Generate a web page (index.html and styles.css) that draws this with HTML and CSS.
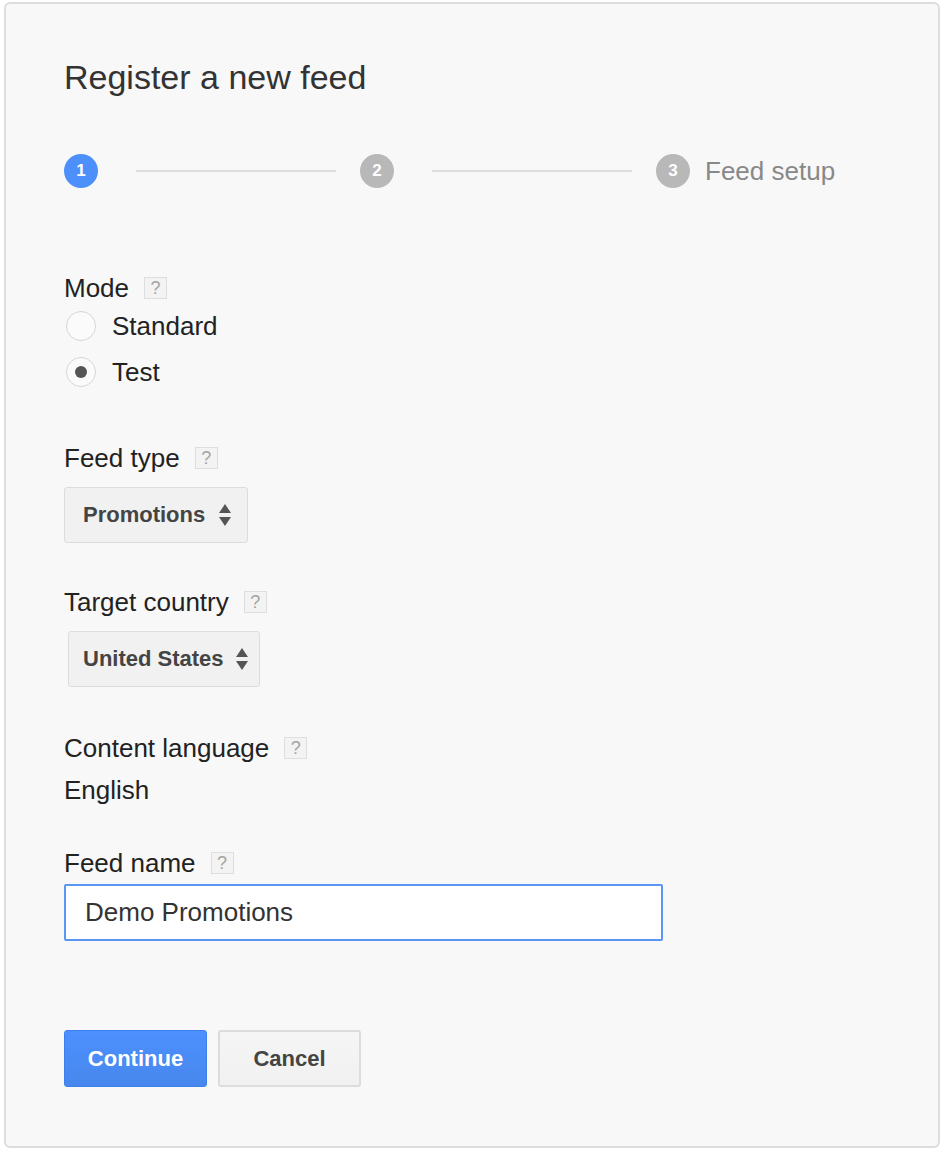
FILE: index.html
```html
<!DOCTYPE html>
<html>
<head>
<meta charset="utf-8">
<link rel="stylesheet" href="styles.css">
</head>
<body>
<div class="panel">
  <h1 class="title">Register a new feed</h1>

  <div class="stepper">
    <span class="step step-active">1</span>
    <span class="step-line"></span>
    <span class="step">2</span>
    <span class="step-line"></span>
    <span class="step">3</span>
    <span class="step-label">Feed setup</span>
  </div>

  <div class="field field-mode">
    <div class="label">Mode <span class="help">?</span></div>
    <div class="radios">
      <div class="radio-row"><span class="radio"></span><span>Standard</span></div>
      <div class="radio-row"><span class="radio radio-on"></span><span>Test</span></div>
    </div>
  </div>

  <div class="field field-type">
    <div class="label">Feed type <span class="help">?</span></div>
    <div class="select">
      <span>Promotions</span>
      <svg class="arrows" width="14" height="24" viewBox="0 0 14 24"><path d="M1 10 L7 1 L13 10 Z M1 14 L13 14 L7 23 Z" fill="#555"/></svg>
    </div>
  </div>

  <div class="field field-country">
    <div class="label">Target country <span class="help">?</span></div>
    <div class="select select-country">
      <span>United States</span>
      <svg class="arrows" width="14" height="24" viewBox="0 0 14 24"><path d="M1 10 L7 1 L13 10 Z M1 14 L13 14 L7 23 Z" fill="#555"/></svg>
    </div>
  </div>

  <div class="field field-lang">
    <div class="label">Content language <span class="help">?</span></div>
    <div class="value">English</div>
  </div>

  <div class="field field-name">
    <div class="label">Feed name <span class="help">?</span></div>
    <div class="input">Demo Promotions</div>
  </div>

  <div class="buttons">
    <button class="btn btn-primary">Continue</button>
    <button class="btn btn-default">Cancel</button>
  </div>
</div>
</body>
</html>
```

FILE: styles.css
```css
html, body {
  margin: 0;
  padding: 0;
  background: #ffffff;
}

body {
  padding: 2px 2px 0 4px;
  font-family: "Liberation Sans", Arial, sans-serif;
  color: #222;
}

.panel {
  width: 936px;
  box-sizing: border-box;
  border: 2px solid #dddddd;
  border-radius: 6px;
  background: #f8f8f8;
  padding: 53px 60px 59px 58px;
}

.title {
  margin: 0;
  font-size: 34px;
  line-height: 40px;
  font-weight: normal;
  color: #333;
}

.stepper {
  margin-top: 57px;
  display: flex;
  align-items: center;
  height: 34px;
}

.step {
  width: 34px;
  height: 34px;
  border-radius: 50%;
  background: #b8b8b8;
  color: #fff;
  font-size: 17px;
  font-weight: bold;
  display: flex;
  align-items: center;
  justify-content: center;
  flex: none;
}

.step-active {
  background: #4d8ffb;
}

.step-line {
  width: 200px;
  height: 2px;
  background: #dddddd;
  margin: 0 24px 0 38px;
  flex: none;
}

.step-label {
  margin-left: 15px;
  font-size: 26px;
  color: #888;
}

.label {
  display: flex;
  align-items: center;
  font-size: 26px;
  line-height: 30px;
  height: 30px;
  color: #222;
}

.help {
  margin-left: 15px;
  width: 21px;
  height: 20px;
  border: 1px solid #dedede;
  background: #f3f3f3;
  color: #a3a3a3;
  font-size: 18px;
  line-height: 21px;
  text-align: center;
  display: inline-block;
}

.field-mode { margin-top: 85px; }
.field-type { margin-top: 56px; }
.field-country { margin-top: 44px; }
.field-lang { margin-top: 46px; }
.field-name { margin-top: 43px; }

.radios {
  margin-top: 8px;
  display: flex;
  flex-direction: column;
  gap: 16px;
}

.radio-row {
  display: flex;
  align-items: center;
  height: 30px;
  font-size: 26px;
  line-height: 30px;
  color: #222;
}

.radio {
  width: 28px;
  height: 28px;
  border: 1px solid #d6d6d6;
  border-radius: 50%;
  background: #fbfbfb;
  margin: 0 16px 0 2px;
  display: flex;
  align-items: center;
  justify-content: center;
  flex: none;
}

.radio-on::after {
  content: "";
  width: 12px;
  height: 12px;
  border-radius: 50%;
  background: #555;
}

.select {
  margin-top: 14px;
  display: inline-flex;
  align-items: center;
  gap: 13px;
  height: 56px;
  box-sizing: border-box;
  padding: 0 15px 0 18px;
  border: 1px solid #dcdcdc;
  border-radius: 3px;
  background: #f1f1f1;
  font-size: 22px;
  font-weight: bold;
  color: #444;
}

.select-country {
  margin-left: 4px;
  padding-left: 14px;
  gap: 11px;
  padding-right: 10px;
}

.arrows {
  flex: none;
}

.value {
  margin-top: 12px;
  font-size: 26px;
  line-height: 30px;
  color: #222;
}

.input {
  margin-top: 6px;
  width: 599px;
  height: 57px;
  box-sizing: border-box;
  border: 2px solid #5b97f2;
  border-radius: 2px;
  background: #fff;
  padding-left: 19px;
  display: flex;
  align-items: center;
  font-size: 26px;
  color: #333;
}

.buttons {
  margin-top: 89px;
  display: flex;
  gap: 11px;
}

.btn {
  width: 143px;
  height: 57px;
  box-sizing: border-box;
  border-radius: 3px;
  font-family: "Liberation Sans", Arial, sans-serif;
  font-size: 22px;
  font-weight: bold;
  padding: 0;
  cursor: pointer;
}

.btn-primary {
  background: linear-gradient(#4d90fe, #4787ed);
  border: 1px solid #3b80ec;
  color: #fff;
}

.btn-default {
  background: linear-gradient(#f5f5f5, #f1f1f1);
  border: 2px solid #dcdcdc;
  color: #444;
}
```
